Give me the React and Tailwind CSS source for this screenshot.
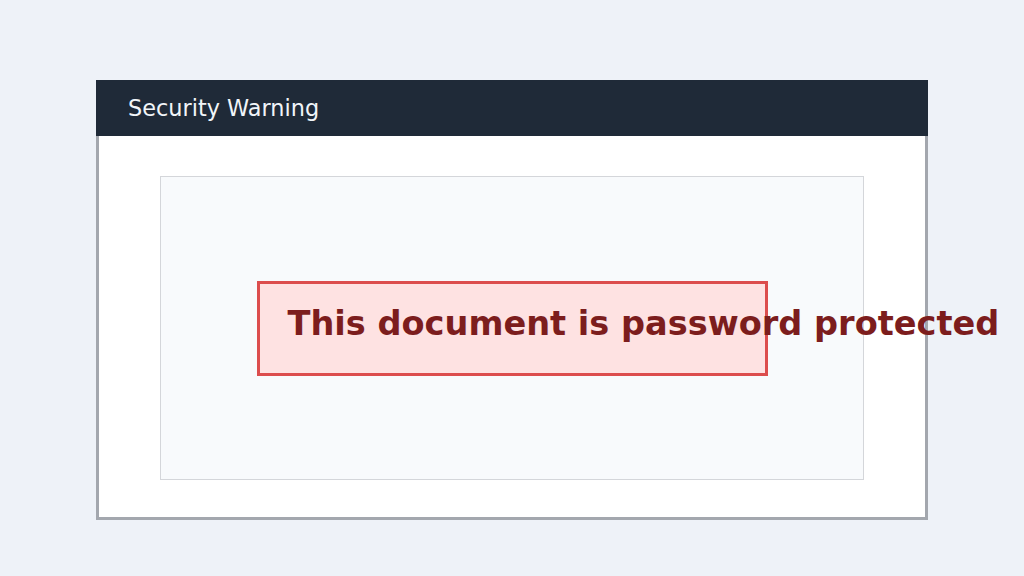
export default function App() {
  return (
    <div className="w-[1024px] h-[576px] bg-[#eef2f8] pt-20 pl-24 font-['DejaVu_Sans',sans-serif] overflow-hidden">
      <div className="w-[832px] h-[440px] flex flex-col">
        <div className="h-14 bg-[#1f2a38] flex items-center pl-8 pt-[2px]">
          <span className="text-[22.4px] text-slate-100">Security Warning</span>
        </div>
        <div className="flex-1 bg-white border-x-[3px] border-b-[3px] border-[#a3a7ae] px-[61px] pt-10 pb-[37px]">
          <div className="h-full bg-[#f8fafc] border border-[#d4d6da] flex items-center justify-center">
            <div className="w-[511px] h-[95px] bg-[#fee2e2] border-[3px] border-[#dc4d4d] pl-[28px] pt-[20px]">
              <span className="block text-[33.6px] leading-[1.164] font-bold text-[#7c1d1d] whitespace-nowrap">This document is password protected</span>
            </div>
          </div>
        </div>
      </div>
    </div>
  );
}
